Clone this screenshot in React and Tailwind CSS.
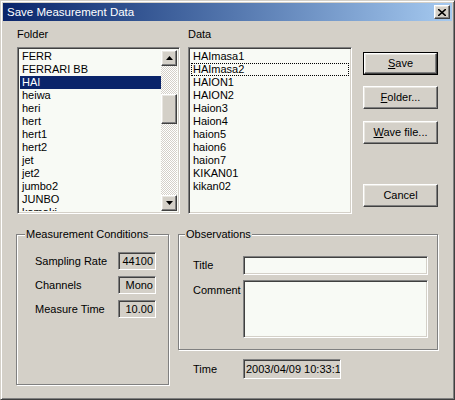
import React from "react";

const sunken =
  "border border-t-[#808080] border-l-[#808080] border-b-white border-r-white shadow-[inset_1px_1px_0_#404040,inset_-1px_-1px_0_#d4d0c8]";
const raised =
  "border border-t-white border-l-white border-b-[#404040] border-r-[#404040] shadow-[inset_-1px_-1px_0_#808080,inset_1px_1px_0_#e8e6e0]";

const folders = [
  "FERR",
  "FERRARI BB",
  "HAI",
  "heiwa",
  "heri",
  "hert",
  "hert1",
  "hert2",
  "jet",
  "jet2",
  "jumbo2",
  "JUNBO",
  "kamaki",
];

const data = [
  "HAImasa1",
  "HAImasa2",
  "HAION1",
  "HAION2",
  "Haion3",
  "Haion4",
  "haion5",
  "haion6",
  "haion7",
  "KIKAN01",
  "kikan02",
];

const Arrow = ({ up }) => (
  <svg width="7" height="4" viewBox="0 0 7 4">
    {up ? <path d="M3.5 0 L7 4 L0 4 Z" fill="#000" /> : <path d="M0 0 L7 0 L3.5 4 Z" fill="#000" />}
  </svg>
);

const Button = ({ children, def, className = "" }) => (
  <div
    className={`w-[75px] h-[23px] ${def ? "border border-black" : ""} ${className}`}
  >
    <div className={`w-full h-full ${raised} flex items-center justify-center`}>
      {children}
    </div>
  </div>
);

const Field = ({ label, value }) => (
  <div className="flex items-center h-[18px]">
    <span className="w-[101px] pl-[18px] whitespace-nowrap">{label}</span>
    <div
      className={`w-[38px] h-[18px] ${sunken} flex items-center justify-end pr-[2px]`}
    >
      {value}
    </div>
  </div>
);

export default function App() {
  return (
    <div
      className="w-[455px] h-[400px] bg-[#d4d0c8] text-black text-[11px] leading-[13px] border border-t-[#d4d0c8] border-l-[#d4d0c8] border-b-[#404040] border-r-[#404040] shadow-[inset_1px_1px_0_#fff,inset_-1px_-1px_0_#808080] overflow-hidden"
      style={{ fontFamily: '"Liberation Sans", Arial, sans-serif' }}
    >
      {/* title bar */}
      <div className="mx-[2px] mt-[2px] h-[18px] flex items-center justify-between pl-[4px] pr-[2px] bg-gradient-to-r from-[#0a246a] to-[#a6caf0]">
        <span className="text-white text-[11.5px]">Save Measurement Data</span>
        <div className={`w-[16px] h-[14px] bg-[#d4d0c8] ${raised} flex items-center justify-center`}>
          <svg width="8" height="7" viewBox="0 0 8 7">
            <path d="M0 0 L8 7 M8 0 L0 7" stroke="#000" strokeWidth="1.6" />
          </svg>
        </div>
      </div>

      {/* top section */}
      <div className="flex pl-[16px] pt-[7px]">
        <div className="w-[163px]">
          <div className="h-[19px]">Folder</div>
          <div className={`h-[167px] ${sunken} bg-[#f8faf5] flex p-[2px]`}>
            <div className="flex-1 overflow-hidden">
              {folders.map((f) => (
                <div
                  key={f}
                  className={`h-[13px] pl-[2px] whitespace-nowrap ${
                    f === "HAI" ? "bg-[#0a246a] text-white" : ""
                  }`}
                >
                  {f}
                </div>
              ))}
            </div>
            <div className="w-[16px] flex flex-col bg-[repeating-conic-gradient(#d4d0c8_0%_25%,#ffffff_0%_50%)] bg-[length:2px_2px]">
              <div className={`h-[16px] bg-[#d4d0c8] ${raised} flex items-center justify-center`}>
                <Arrow up />
              </div>
              <div className="h-[28px]" />
              <div className={`h-[30px] bg-[#d4d0c8] ${raised}`} />
              <div className="flex-1" />
              <div className={`h-[16px] bg-[#d4d0c8] ${raised} flex items-center justify-center`}>
                <Arrow />
              </div>
            </div>
          </div>
        </div>

        <div className="w-[164px] ml-[8px]">
          <div className="h-[19px]">Data</div>
          <div className={`h-[167px] ${sunken} bg-[#f8faf5] p-[2px]`}>
            {data.map((d) => (
              <div
                key={d}
                className={`h-[13px] pl-[2px] whitespace-nowrap ${
                  d === "HAImasa2" ? "outline outline-1 outline-dotted outline-black -outline-offset-1" : ""
                }`}
              >
                {d}
              </div>
            ))}
          </div>
        </div>

        <div className="ml-[11px] pt-[24px] flex flex-col">
          <Button def>
            <span>
              <u>S</u>ave
            </span>
          </Button>
          <Button className="mt-[11px]">
            <span>
              <u>F</u>older...
            </span>
          </Button>
          <Button className="mt-[12px]">
            <span>
              <u>W</u>ave file...
            </span>
          </Button>
          <Button className="mt-[40px]">Cancel</Button>
        </div>
      </div>

      {/* bottom section */}
      <div className="flex pl-[15px] mt-[14px]">
        <fieldset className="w-[153px] h-[157px] border border-[#808080] shadow-[inset_1px_1px_0_#fff,1px_1px_0_#fff] px-0">
          <legend className="ml-[8px] px-[1px] bg-[#d4d0c8]">Measurement Conditions</legend>
          <div className="flex flex-col gap-[6px] mt-[11px]">
            <Field label="Sampling Rate" value="44100" />
            <Field label="Channels" value="Mono" />
            <Field label="Measure Time" value="10.00" />
          </div>
        </fieldset>

        <div className="ml-[9px]">
          <fieldset className="w-[260px] h-[122px] border border-[#808080] shadow-[inset_1px_1px_0_#fff,1px_1px_0_#fff] px-0">
            <legend className="ml-[6px] px-[1px] bg-[#d4d0c8]">Observations</legend>
            <div className="flex items-center mt-[15px]">
              <span className="w-[64px] pl-[14px]">Title</span>
              <div className={`w-[185px] h-[19px] ${sunken} bg-[#f8faf5]`} />
            </div>
            <div className="flex items-start mt-[5px]">
              <span className="w-[64px] pl-[14px] pt-[4px]">Comment</span>
              <div className={`w-[185px] h-[58px] ${sunken} bg-[#f8faf5]`} />
            </div>
          </fieldset>
          <div className="flex items-center mt-[9px]">
            <span className="w-[65px] pl-[15px]">Time</span>
            <div className={`w-[98px] h-[20px] ${sunken} flex items-center pl-[2px] overflow-hidden whitespace-nowrap`}>
              2003/04/09 10:33:12
            </div>
          </div>
        </div>
      </div>
    </div>
  );
}
